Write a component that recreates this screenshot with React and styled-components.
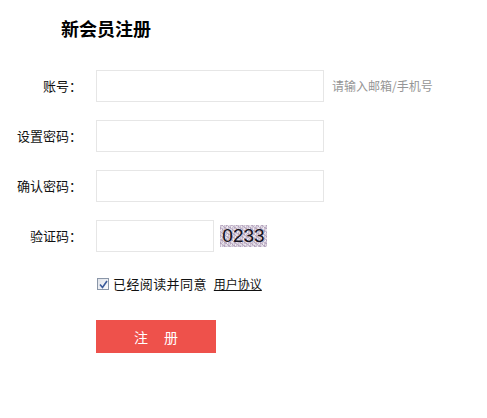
import React from "react";
import styled, { createGlobalStyle } from "styled-components";

const Global = createGlobalStyle`
  html, body { margin: 0; padding: 0; background: #fff; }
  body { font-family: "Noto Sans CJK SC", "Liberation Sans", sans-serif; color: #333; }
  * { box-sizing: border-box; }
`;

const Page = styled.div`
  width: 487px;
  height: 418px;
  padding-top: 16px;
`;

const Title = styled.h1`
  margin: 0 0 0 61px;
  font-size: 18px;
  line-height: 24px;
  font-weight: 700;
  color: #000;
`;

const Form = styled.form`
  margin-top: 30px;
  display: flex;
  flex-direction: column;
  gap: 18px;
`;

const Row = styled.div`
  display: flex;
  align-items: center;
  height: 32px;
`;

const Label = styled.label`
  width: 82px;
  margin-right: 14px;
  text-align: right;
  font-size: 13px;
  line-height: 18px;
  color: #111;
`;

const Input = styled.input`
  width: ${(p) => p.$w || 228}px;
  height: 32px;
  border: 1px solid #e6e6e6;
  outline: none;
  padding: 0 8px;
  font-size: 13px;
  background: #fff;
`;

const Hint = styled.span`
  margin-left: 8px;
  font-size: 12px;
  line-height: 16px;
  color: #959595;
`;

const Captcha = styled.span`
  margin-left: 6px;
  width: 47px;
  height: 22px;
  display: flex;
  align-items: center;
  justify-content: center;
  font-family: "Liberation Sans", "DejaVu Sans", sans-serif;
  font-size: 19px;
  color: #141320;
  background-color: #ddd6e0;
  background-image:
    repeating-linear-gradient(37deg, rgba(150, 125, 165, 0.45) 0 1px, transparent 1px 3px),
    repeating-linear-gradient(-61deg, rgba(255, 255, 255, 0.55) 0 1px, transparent 1px 4px),
    repeating-linear-gradient(90deg, rgba(160, 140, 175, 0.3) 0 1px, transparent 1px 2px);
`;

const Agree = styled.div`
  display: flex;
  align-items: center;
  height: 20px;
  margin-top: 22px;
  padding-left: 97px;
`;

const Box = styled.span`
  width: 12px;
  height: 12px;
  border: 1px solid #8a96a8;
  background: linear-gradient(135deg, #dfe3ea, #fbfbfd);
  display: flex;
  align-items: center;
  justify-content: center;
`;

const AgreeText = styled.span`
  margin-left: 4px;
  font-size: 13px;
  letter-spacing: 0.4px;
  line-height: 18px;
  color: #111;
`;

const Link = styled.a`
  margin-left: 7px;
  font-size: 12px;
  line-height: 18px;
  color: #111;
  text-decoration: underline;
`;

const Submit = styled.button`
  margin: 26px 0 0 96px;
  width: 120px;
  height: 33px;
  border: none;
  background: #ee514b;
  color: #fff;
  font-family: "Noto Sans CJK SC", sans-serif;
  font-size: 14px;
  display: flex;
  align-items: center;
  justify-content: center;
  gap: 16px;
  padding: 0;
`;

export default function App() {
  return (
    <Page>
      <Global />
      <Title>新会员注册</Title>
      <Form onSubmit={(e) => e.preventDefault()}>
        <Row>
          <Label>账号：</Label>
          <Input />
          <Hint>请输入邮箱/手机号</Hint>
        </Row>
        <Row>
          <Label>设置密码：</Label>
          <Input type="password" />
        </Row>
        <Row>
          <Label>确认密码：</Label>
          <Input type="password" />
        </Row>
        <Row>
          <Label>验证码：</Label>
          <Input $w={118} />
          <Captcha>0233</Captcha>
        </Row>
      </Form>
      <Agree>
        <Box>
          <svg width="9" height="9" viewBox="0 0 9 9">
            <path d="M1 4.5 L3.5 7.5 L8 1" fill="none" stroke="#3a5a9a" strokeWidth="1.6" />
          </svg>
        </Box>
        <AgreeText>已经阅读并同意</AgreeText>
        <Link href="#">用户协议</Link>
      </Agree>
      <Submit>
        <span>注</span>
        <span>册</span>
      </Submit>
    </Page>
  );
}
